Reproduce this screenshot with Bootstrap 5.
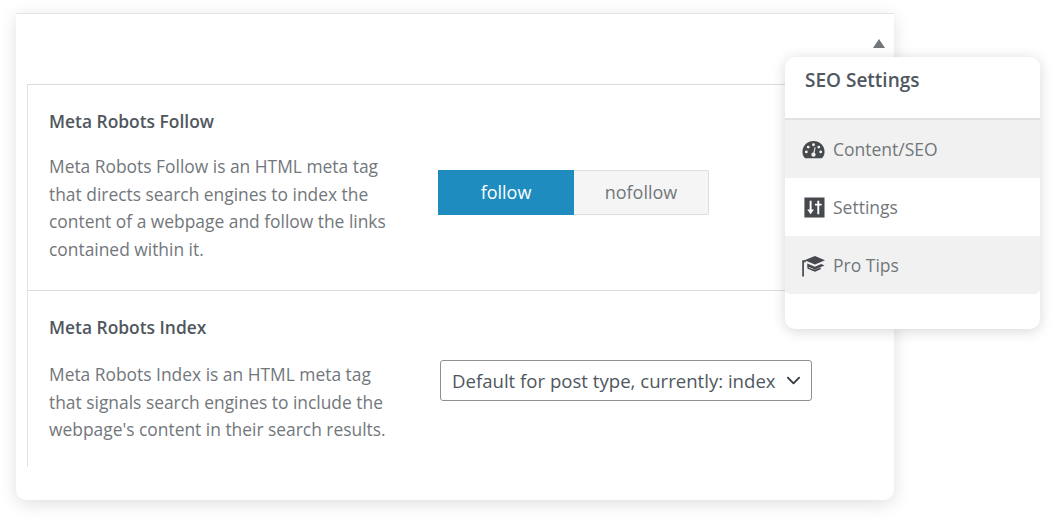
<!DOCTYPE html>
<html lang="en">
  <head>
    <meta charset="UTF-8" />
    <meta name="viewport" content="width=device-width, initial-scale=1.0" />
    <title>SEO Settings</title>
    <link href="https://cdn.jsdelivr.net/npm/bootstrap@5.3.0/dist/css/bootstrap.min.css" rel="stylesheet" />
    <style>
      body { background: #fff; font-family: "Open Sans", "Noto Sans", sans-serif; color: #50575e; overflow: hidden; }
      .stage { position: relative; width: 1053px; height: 520px; padding: 13px 0 0 16px; }
      .seo-box { width: 878px; height: 487px; border: 0; border-top: 1px solid #e4e4e4; border-radius: 0 0 10px 10px; box-shadow: 0 4px 18px rgba(0,0,0,.13); padding: 70px 11px 0; }
      .arrow-up { position: absolute; left: 873px; top: 39px; width: 0; height: 0; border-left: 6px solid transparent; border-right: 6px solid transparent; border-bottom: 9px solid #72777c; }
      .fields { border-left: 1px solid #e2e2e2; height: 383px; }
      .field { padding: 25px 21px 0; border-top: 1px solid #dcdcdc; }
      .field-first { height: 206px; }
      .field-title { font-size: 17.4px; font-weight: 600; color: #50575e; line-height: 22px; margin-bottom: 21px; }
      .field-title.wider { margin-bottom: 23px; }
      .field-text { width: 346px; margin: 0 43px 0 0; flex: none; font-size: 17.4px; line-height: 27.7px; color: #72777c; }
      .toggle { margin-top: 17px; }
      .toggle .btn { width: 136px; height: 45px; border-radius: 0; font-size: 18px; padding: 0; }
      .btn.on { background: #1e8cbe; border: 0; color: #fff; }
      .toggle .btn.off { width: 135px; background: #f5f5f5; border: 1px solid #ddd; color: #72777c; border-left: 0; border-radius: 0 2px 2px 0; }
      .form-select.seo-select { width: 372px; height: 41px; margin: -1px 0 0 2px; font-size: 18.6px; color: #50575e; border: 1px solid #8c8f94; border-radius: 3px; padding: 0 30px 0 11px; background-position: right 8px center; background-size: 19px 15px; box-shadow: none; }
      .side-panel { position: absolute; left: 785px; top: 57px; width: 255px; height: 272px; border: 0; border-radius: 10px; box-shadow: 0 2px 14px rgba(0,0,0,.16); overflow: hidden; }
      .side-head { height: 63px; padding: 10px 20px; font-size: 19px; font-weight: 600; color: #50575e; line-height: 26px; border-bottom: 2px solid #e2e2e2; }
      .side-panel .list-group-item { height: 58px; border: 0; padding: 0 0 0 17px; display: flex; align-items: center; gap: 8px; font-size: 17.5px; color: #72777c; background: #fff; }
      .side-panel .list-group-item.shade { background: #f1f1f1; }
      .side-panel svg { width: 23px; height: 23px; flex: none; fill: #46494d; }
      .side-panel svg.wide-icon { width: 25px; margin-left: -1px; margin-right: -1px; }
    </style>
  </head>
  <body>
    <div class="stage">
      <div class="card seo-box">
        <div class="fields">
          <div class="field field-first">
            <div class="field-title">Meta Robots Follow</div>
            <div class="d-flex">
              <p class="field-text">Meta Robots Follow is an HTML meta tag that directs search engines to index the content of a webpage and follow the links contained within it.</p>
              <div class="btn-group toggle align-self-start">
                <button type="button" class="btn on">follow</button>
                <button type="button" class="btn off ms-0">nofollow</button>
              </div>
            </div>
          </div>
          <div class="field">
            <div class="field-title wider">Meta Robots Index</div>
            <div class="d-flex">
              <p class="field-text">Meta Robots Index is an HTML meta tag that signals search engines to include the webpage's content in their search results.</p>
              <div>
                <select class="form-select seo-select"><option>Default for post type, currently: index</option></select>
              </div>
            </div>
          </div>
        </div>
      </div>
      <span class="arrow-up"></span>
      <div class="card side-panel">
        <div class="side-head">SEO Settings</div>
        <div class="list-group list-group-flush">
          <a class="list-group-item shade" href="#">
            <svg viewBox="0 0 24 24"><path fill-rule="evenodd" d="M12 3a11.500 11.500 0 0 0-11.500 11.500c0 2.400.8 4.500 2.200 6 .3.400.7.500 1.200.500h16.200c.5 0 .9-.1 1.200-.5 1.400-1.500 2.200-3.600 2.200-6A11.500 11.500 0 0 0 12 3zm0 2.500a1.500 1.500 0 1 1 0 3 1.500 1.500 0 0 1 0-3zM6.500 8a1.500 1.500 0 1 1 0 3 1.500 1.500 0 0 1 0-3zm11 0a1.500 1.500 0 1 1 0 3 1.500 1.500 0 0 1 0-3zM4.500 13a1.500 1.500 0 1 1 0 3 1.500 1.500 0 0 1 0-3zm15 0a1.500 1.500 0 1 1 0 3 1.500 1.500 0 0 1 0-3zM13.300 9.500l.9.300-1.100 5.700c.6.400 1.100 1.100 1.100 1.900a2.200 2.200 0 0 1-4.400 0c0-1.200 1-2.200 2.100-2.200z"/></svg>
            Content/SEO
          </a>
          <a class="list-group-item" href="#">
            <svg viewBox="0 0 24 24"><path fill-rule="evenodd" d="M2.500 1.500h21v21h-21zM8 5v9H5.500L9 19l3.500-5H10V5zm8 14h2V10h2.500V8H18V5h-2v3h-2.500v2H16z"/></svg>
            Settings
          </a>
          <a class="list-group-item shade" href="#">
            <svg class="wide-icon" viewBox="0 0 24 24"><path fill-rule="evenodd" d="M2.500 6.500 13.500 2 24 6.500 13.500 11 4 7v1.500H2v15H.2V6.500zM5.500 9.800l8 3.400 6.500-2.800 3.500 1.500-10 4.300-5.500-2.300-2.500 1zM6 15.500l7.500 3 6-2.500v-2l-6 2.500L6 14z"/></svg>
            Pro Tips
          </a>
        </div>
      </div>
    </div>
    <script src="https://cdn.jsdelivr.net/npm/bootstrap@5.3.0/dist/js/bootstrap.bundle.min.js"></script>
  </body>
</html>
